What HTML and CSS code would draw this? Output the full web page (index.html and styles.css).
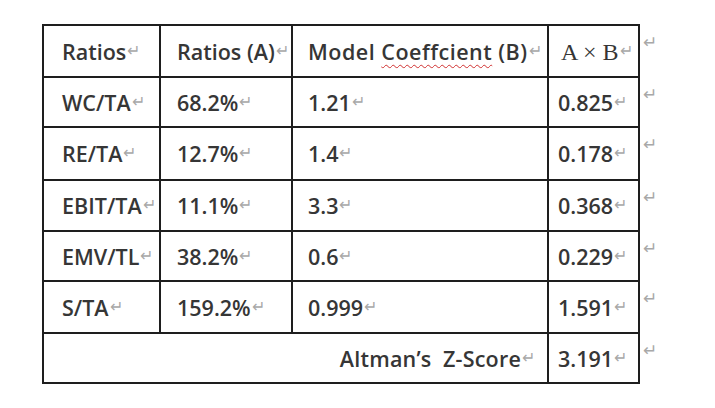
FILE: index.html
```html
<!DOCTYPE html>
<html>
<head>
<meta charset="utf-8">
<link rel="stylesheet" href="styles.css">
</head>
<body>
<div class="page">
  <div class="table">
    <div class="cell c1"><span>Ratios<span class="pm">↵</span></span></div>
    <div class="cell c2"><span>Ratios (A)<span class="pm">↵</span></span></div>
    <div class="cell c3 wide"><span>Model <span class="typo">Coeffcient</span> (B)<span class="pm">↵</span></span></div>
    <div class="cell c4"><span><span class="math">A × B</span><span class="pm">↵</span></span></div>

    <div class="cell c1"><span>WC/TA<span class="pm">↵</span></span></div>
    <div class="cell c2"><span>68.2%<span class="pm">↵</span></span></div>
    <div class="cell c3"><span>1.21<span class="pm">↵</span></span></div>
    <div class="cell c4"><span>0.825<span class="pm">↵</span></span></div>

    <div class="cell c1"><span>RE/TA<span class="pm">↵</span></span></div>
    <div class="cell c2"><span>12.7%<span class="pm">↵</span></span></div>
    <div class="cell c3"><span>1.4<span class="pm">↵</span></span></div>
    <div class="cell c4"><span>0.178<span class="pm">↵</span></span></div>

    <div class="cell c1"><span>EBIT/TA<span class="pm">↵</span></span></div>
    <div class="cell c2"><span>11.1%<span class="pm">↵</span></span></div>
    <div class="cell c3"><span>3.3<span class="pm">↵</span></span></div>
    <div class="cell c4"><span>0.368<span class="pm">↵</span></span></div>

    <div class="cell c1"><span>EMV/TL<span class="pm">↵</span></span></div>
    <div class="cell c2"><span>38.2%<span class="pm">↵</span></span></div>
    <div class="cell c3"><span>0.6<span class="pm">↵</span></span></div>
    <div class="cell c4"><span>0.229<span class="pm">↵</span></span></div>

    <div class="cell c1"><span>S/TA<span class="pm">↵</span></span></div>
    <div class="cell c2"><span>159.2%<span class="pm">↵</span></span></div>
    <div class="cell c3"><span>0.999<span class="pm">↵</span></span></div>
    <div class="cell c4"><span>1.591<span class="pm">↵</span></span></div>

    <div class="cell span3"><span>Altman’s&nbsp; Z-Score<span class="pm">↵</span></span></div>
    <div class="cell c4"><span>3.191<span class="pm">↵</span></span></div>
  </div>
  <div class="marks">
    <div class="mark">↵</div>
    <div class="mark">↵</div>
    <div class="mark">↵</div>
    <div class="mark">↵</div>
    <div class="mark">↵</div>
    <div class="mark">↵</div>
    <div class="mark">↵</div>
  </div>
</div>
</body>
</html>
```

FILE: styles.css
```css
html, body {
  margin: 0;
  padding: 0;
  background: #fff;
}
body {
  font-family: "Open Sans", "Noto Sans", sans-serif;
  color: #363636;
}
.page {
  display: flex;
  align-items: flex-start;
  padding: 24px 0 0 42px;
}
.table {
  display: grid;
  grid-template-columns: 115px 130px 254px 89px;
  grid-template-rows: 50px 48px 51px 49px 48px 50px 48px;
  gap: 2px;
  padding: 2px;
  background: #1e1e1e;
}
.cell {
  background: #fff;
  display: flex;
  align-items: center;
  font-size: 21.5px;
  font-weight: 600;
  white-space: nowrap;
  overflow: hidden;
}
.c1 { padding-left: 18px; }
.c2 { padding-left: 16px; }
.c3 { padding-left: 15px; }
.c4 { padding-left: 9px; }
.wide { letter-spacing: 0.5px; }
.span3 {
  grid-column: span 3;
  justify-content: flex-end;
  padding-right: 12px;
  letter-spacing: 0.2px;
}
.math {
  font-family: "Liberation Serif", "DejaVu Serif", serif;
  font-size: 24px;
  font-weight: 400;
  margin-left: 3px;
}
.typo {
  text-decoration: underline wavy #d03030;
  text-decoration-thickness: 1px;
  text-underline-offset: 4px;
}
.pm {
  color: #a8a8a8;
  font-size: 16px;
  font-weight: 400;
  position: relative;
  top: -4px;
  margin-left: 1px;
  letter-spacing: 0;
}
.marks {
  display: grid;
  grid-template-rows: 50px 48px 51px 49px 48px 50px 48px;
  row-gap: 2px;
  padding-top: 2px;
  margin-left: 3px;
}
.mark {
  color: #a8a8a8;
  font-size: 17px;
  padding-top: 4px;
}
```
